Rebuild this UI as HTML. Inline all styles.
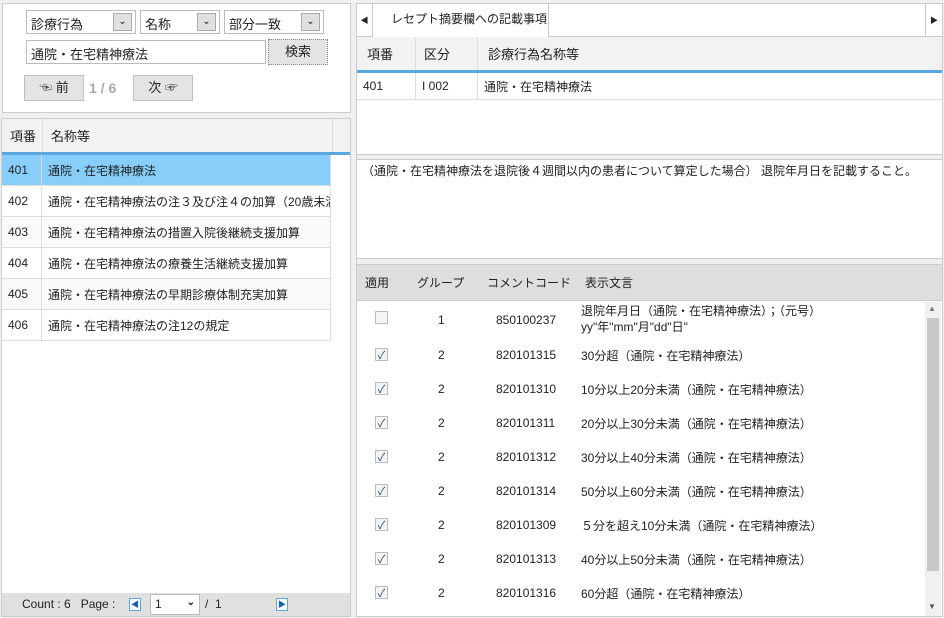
<!DOCTYPE html>
<html><head><meta charset="utf-8"><style>
*{box-sizing:border-box;margin:0;padding:0}
body{width:944px;height:618px;background:#f0f0f0;font-family:"Liberation Sans","Noto Sans CJK JP",sans-serif;font-size:12px;color:#222;position:relative;overflow:hidden}
.a{position:absolute;white-space:nowrap}
.sel{position:absolute;height:24px;border:1px solid #bbb;background:#fff;font-size:13px;padding:3px 4px}
.sel i{position:absolute;right:3px;top:2px;width:19px;height:18px;background:#e0e0e0;border:1px solid #aaa;font-style:normal;font-size:10px;text-align:center;line-height:16px}
.btn{position:absolute;background:#e4e4e4;border:1px solid #c0c0c0;text-align:center;font-size:13px}
.hdr{position:absolute;background:#f2f2f2;border-bottom:3px solid #5aa7e0}
.c{position:absolute;top:0;height:100%;border-right:1px solid #ddd;display:flex;align-items:center;padding-left:8px;white-space:nowrap}
.row{position:absolute;left:0;height:31px;border-bottom:1px solid #ddd;background:#fff}
.row div{position:absolute;top:0;height:100%;display:flex;align-items:center;border-right:1px solid #ddd;padding-left:6px;white-space:nowrap;overflow:hidden}
.lr{position:absolute;left:0;width:568px;height:34px}
.lr div{position:absolute;top:0;height:100%;display:flex;align-items:center;white-space:nowrap}
.lr div.cb{width:13px;height:13px;border:1px solid #bbb;background:#f4f4f4;left:18px;top:10px;color:#2a4a80;font-size:11px;justify-content:center}
</style></head><body>
<div class="a" style="left:2px;top:3px;width:349px;height:110px;background:#fff;border:1px solid #ccc"></div>
<div class="sel" style="left:26px;top:10px;width:110px">診療行為<i>⌄</i></div>
<div class="sel" style="left:140px;top:10px;width:80px">名称<i>⌄</i></div>
<div class="sel" style="left:224px;top:10px;width:100px">部分一致<i>⌄</i></div>
<div class="sel" style="left:26px;top:40px;width:240px">通院・在宅精神療法</div>
<div class="btn" style="left:268px;top:39px;width:60px;height:26px;line-height:24px;border:1px dotted #888">検索</div>
<div class="btn" style="left:24px;top:75px;width:60px;height:26px;line-height:24px">☜ 前</div>
<div class="a" style="left:89px;top:80px;color:#aaa;font-weight:bold;font-size:14px">1 / 6</div>
<div class="btn" style="left:133px;top:75px;width:60px;height:26px;line-height:24px">次 ☞</div>
<div class="a" style="left:1px;top:118px;width:350px;height:499px;background:#fff;border:1px solid #ccc"></div>
<div class="hdr" style="left:2px;top:119px;width:348px;height:36px;font-size:13px">
<div class="c" style="left:0;width:41px;padding-left:8px">項番</div><div class="c" style="left:41px;width:290px">名称等</div></div>
<div class="a" style="left:2px;top:155px;width:329px;height:186px">
<div class="row" style="top:0;width:329px;background:#87cffa"><div style="left:0;width:40px">401</div><div style="left:40px;width:289px">通院・在宅精神療法</div></div>
<div class="row" style="top:31px;width:329px"><div style="left:0;width:40px">402</div><div style="left:40px;width:289px">通院・在宅精神療法の注３及び注４の加算（20歳未満、1</div></div>
<div class="row" style="top:62px;width:329px;background:#f9f9f9"><div style="left:0;width:40px">403</div><div style="left:40px;width:289px">通院・在宅精神療法の措置入院後継続支援加算</div></div>
<div class="row" style="top:93px;width:329px"><div style="left:0;width:40px">404</div><div style="left:40px;width:289px">通院・在宅精神療法の療養生活継続支援加算</div></div>
<div class="row" style="top:124px;width:329px;background:#f9f9f9"><div style="left:0;width:40px">405</div><div style="left:40px;width:289px">通院・在宅精神療法の早期診療体制充実加算</div></div>
<div class="row" style="top:155px;width:329px"><div style="left:0;width:40px">406</div><div style="left:40px;width:289px">通院・在宅精神療法の注12の規定</div></div>
</div>
<div class="a" style="left:2px;top:593px;width:348px;height:23px;background:#e0e0e0;font-size:12px">
<span class="a" style="left:20px;top:4px">Count : 6 &nbsp; Page :</span>
<span class="a" style="left:127px;top:5px;width:12px;height:13px;border:1px solid #5aa7e0;background:#fff;font-size:8px;color:#1060c0;text-align:center">◀</span>
<span class="a" style="left:148px;top:1px;width:50px;height:21px;background:#fff;border:1px solid #bbb;padding:2px 4px">1 <b style="float:right;font-size:10px">⌄</b></span>
<span class="a" style="left:203px;top:4px">/ &nbsp;1</span>
<span class="a" style="left:274px;top:5px;width:12px;height:13px;border:1px solid #5aa7e0;background:#fff;font-size:8px;color:#1060c0;text-align:center">▶</span>
</div>
<div class="a" style="left:356px;top:3px;width:587px;height:614px;background:#fff;border:1px solid #ccc"></div>
<div class="a" style="left:357px;top:4px;width:585px;height:33px;background:#fff;border-bottom:1px solid #ccc"></div>
<div class="a" style="left:357px;top:4px;width:16px;height:33px;border-right:1px solid #ccc;font-size:8px;line-height:33px;text-align:center">◀</div>
<div class="a" style="left:373px;top:4px;width:176px;height:34px;background:#fff;border-right:1px solid #ccc;font-size:12px;line-height:30px;padding-left:18px;overflow:hidden">レセプト摘要欄への記載事項</div>
<div class="a" style="left:925px;top:4px;width:17px;height:33px;border-left:1px solid #ccc;font-size:8px;line-height:33px;text-align:center">▶</div>
<div class="hdr" style="left:357px;top:37px;width:585px;height:36px;font-size:13px">
<div class="c" style="left:0;width:59px;padding-left:10px">項番</div><div class="c" style="left:59px;width:62px;padding-left:8px">区分</div><div class="c" style="left:121px;width:464px;border:0;padding-left:10px">診療行為名称等</div></div>
<div class="row" style="left:357px;top:73px;width:585px;height:27px"><div style="left:0;width:59px">401</div><div style="left:59px;width:62px">I 002</div><div style="left:121px;width:464px;border:0">通院・在宅精神療法</div></div>
<div class="a" style="left:357px;top:154px;width:585px;height:6px;background:#f0f0f0;border-top:1px solid #ccc;border-bottom:1px solid #ccc"></div>
<div class="a" style="left:362px;top:162px;font-size:12px">（通院・在宅精神療法を退院後４週間以内の患者について算定した場合） 退院年月日を記載すること。</div>
<div class="a" style="left:357px;top:258px;width:585px;height:7px;background:#f0f0f0;border-top:1px solid #ccc;border-bottom:1px solid #ccc"></div>
<div class="a" style="left:357px;top:265px;width:585px;height:36px;background:#dedede;border-bottom:1px solid #ccc;font-size:12px">
<div class="c" style="left:0;width:48px">適用</div><div class="c" style="left:48px;width:72px;padding-left:12px">グループ</div><div class="c" style="left:120px;width:98px;padding-left:10px">コメントコード</div><div class="c" style="left:218px;width:348px;padding-left:10px">表示文言</div></div>
<div class="a" style="left:925px;top:302px;width:16px;height:314px;background:#f0f0f0"><div class="a" style="left:2px;top:16px;width:12px;height:253px;background:#c8c8c8"></div><div class="a" style="left:3px;top:2px;font-size:8px;color:#777">▲</div><div class="a" style="left:3px;top:300px;font-size:8px;color:#555">▼</div></div>
<div class="a" style="left:357px;top:301px;width:568px;height:315px;overflow:hidden">
<div class="lr" style="top:0;height:37px"><div class="cb"></div><div style="left:81px">1</div><div style="left:139px">850100237</div><div style="left:224px;line-height:16px;display:block;padding-top:2px">退院年月日（通院・在宅精神療法）；（元号）<br>yy"年"mm"月"dd"日"</div></div>
<div class="lr" style="top:37px"><div class="cb">✓</div><div style="left:81px">2</div><div style="left:139px">820101315</div><div style="left:224px">30分超（通院・在宅精神療法）</div></div>
<div class="lr" style="top:71px"><div class="cb">✓</div><div style="left:81px">2</div><div style="left:139px">820101310</div><div style="left:224px">10分以上20分未満（通院・在宅精神療法）</div></div>
<div class="lr" style="top:105px"><div class="cb">✓</div><div style="left:81px">2</div><div style="left:139px">820101311</div><div style="left:224px">20分以上30分未満（通院・在宅精神療法）</div></div>
<div class="lr" style="top:139px"><div class="cb">✓</div><div style="left:81px">2</div><div style="left:139px">820101312</div><div style="left:224px">30分以上40分未満（通院・在宅精神療法）</div></div>
<div class="lr" style="top:173px"><div class="cb">✓</div><div style="left:81px">2</div><div style="left:139px">820101314</div><div style="left:224px">50分以上60分未満（通院・在宅精神療法）</div></div>
<div class="lr" style="top:207px"><div class="cb">✓</div><div style="left:81px">2</div><div style="left:139px">820101309</div><div style="left:224px">５分を超え10分未満（通院・在宅精神療法）</div></div>
<div class="lr" style="top:241px"><div class="cb">✓</div><div style="left:81px">2</div><div style="left:139px">820101313</div><div style="left:224px">40分以上50分未満（通院・在宅精神療法）</div></div>
<div class="lr" style="top:275px"><div class="cb">✓</div><div style="left:81px">2</div><div style="left:139px">820101316</div><div style="left:224px">60分超（通院・在宅精神療法）</div></div>
</div>
</body></html>
